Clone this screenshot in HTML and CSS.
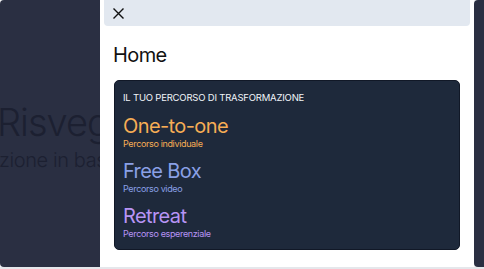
FILE: index.html
```html
<!DOCTYPE html>
<html lang="it">
<head>
<meta charset="utf-8">
<title>Home</title>
<link rel="stylesheet" href="styles.css">
</head>
<body>
<div class="frame">
  <div class="backdrop">
    <div class="bg-title">Risveglia</div>
    <div class="bg-sub">zione in base</div>
  </div>
  <aside class="drawer">
    <div class="topbar">
      <button class="close" aria-label="Chiudi">
        <svg width="11" height="11" viewBox="0 0 11 11"><path d="M1 1L10 10M10 1L1 10" stroke="#111" stroke-width="1.4" fill="none" stroke-linecap="square"/></svg>
      </button>
    </div>
    <h1 class="page-title">Home</h1>
    <section class="card">
      <div class="card-label">IL TUO PERCORSO DI TRASFORMAZIONE</div>
      <div class="path path-orange">
        <div class="path-name">One-to-one</div>
        <div class="path-desc">Percorso individuale</div>
      </div>
      <div class="path path-blue">
        <div class="path-name">Free Box</div>
        <div class="path-desc">Percorso video</div>
      </div>
      <div class="path path-purple">
        <div class="path-name">Retreat</div>
        <div class="path-desc">Percorso esperenziale</div>
      </div>
    </section>
  </aside>
  <div class="backdrop-right"></div>
</div>
</body>
</html>
```

FILE: styles.css
```css
html, body {
  margin: 0;
  padding: 0;
}
body {
  background: #e5e7eb;
  font-family: Inter, "Noto Sans", sans-serif;
  width: 484px;
  height: 269px;
  overflow: hidden;
}
.frame {
  display: flex;
  height: 267px;
  background: #f3f4f6;
}
.backdrop {
  width: 100px;
  flex: none;
  background: #2a2f42;
  border-radius: 4px 0 0 4px;
  overflow: hidden;
  white-space: nowrap;
  padding-top: 98px;
  box-sizing: border-box;
  color: #1c2031;
}
.bg-title {
  font-size: 38px;
  line-height: 48px;
  font-weight: 300;
  margin-left: -3px;
  letter-spacing: -1px;
}
.bg-sub {
  font-size: 20px;
  line-height: 28px;
  font-weight: 300;
  margin-left: -1px;
  letter-spacing: -0.4px;
}
.drawer {
  flex: 1;
  background: #fff;
  display: flex;
  flex-direction: column;
}
.backdrop-right {
  width: 10px;
  flex: none;
  background: #2a2f42;
  border-radius: 4px 0 0 4px;
}
.topbar {
  margin: 0 4px;
  height: 26px;
  background: #e2e8f0;
  border-radius: 0 0 4px 4px;
  display: flex;
  align-items: center;
  padding-left: 9px;
}
.close {
  border: 0;
  background: none;
  padding: 0;
  width: 11px;
  height: 11px;
  display: block;
}
.close svg { display: block; }
.page-title {
  margin: 17px 0 0 13px;
  font-size: 20px;
  line-height: 24px;
  font-weight: 400;
  color: #111;
  letter-spacing: -0.6px;
}
.card {
  margin: 13px 14px 0 14px;
  background: #1e293b;
  border: 1px solid #111827;
  border-radius: 5px;
  padding: 11px 8px 10px 8px;
  display: flex;
  flex-direction: column;
  gap: 11px;
}
.card-label {
  font-size: 9.5px;
  line-height: 12px;
  color: #f1f5f9;
  letter-spacing: -0.2px;
}
.path-name {
  font-size: 20px;
  line-height: 22px;
  letter-spacing: -0.6px;
}
.path-desc {
  margin-top: 1px;
  font-size: 9px;
  line-height: 11px;
  letter-spacing: -0.35px;
}
.path-orange { color: #f6ad55; }
.path-blue { color: #8aa0e6; }
.path-purple { color: #b794f4; }
```
